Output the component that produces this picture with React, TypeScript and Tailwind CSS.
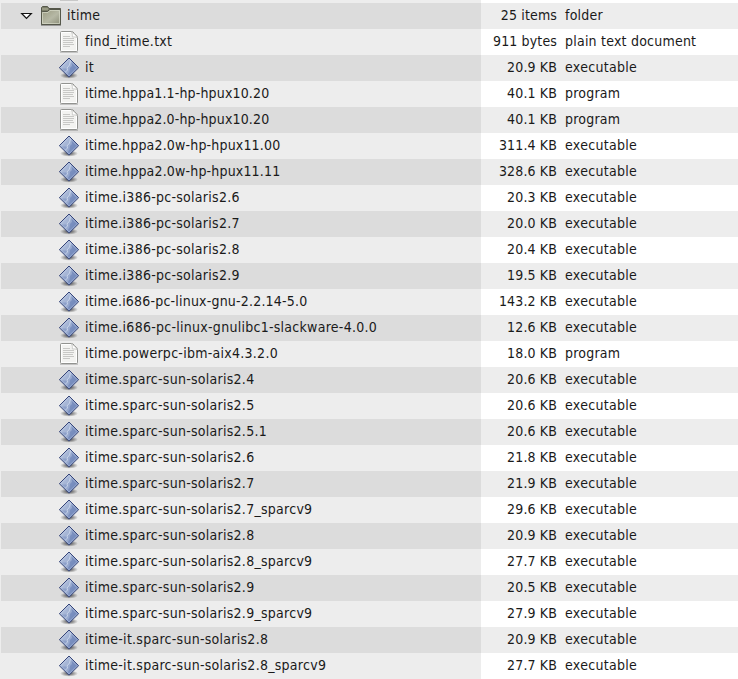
type Kind = "folder" | "document" | "executable";

interface Entry {
  name: string;
  size: string;
  type: string;
  kind: Kind;
  tracking?: string;
}

const exe = (name: string, size: string, tracking?: string): Entry => ({
  name,
  size,
  type: "executable",
  kind: "executable",
  tracking,
});
const program = (name: string, size: string, tracking?: string): Entry => ({
  name,
  size,
  type: "program",
  kind: "document",
  tracking,
});

const entries: Entry[] = [
  { name: "itime", size: "25 items", type: "folder", kind: "folder" },
  { name: "find_itime.txt", size: "911 bytes", type: "plain text document", kind: "document" },
  exe("it", "20.9 KB"),
  program("itime.hppa1.1-hp-hpux10.20", "40.1 KB", "tracking-[0.16px]"),
  program("itime.hppa2.0-hp-hpux10.20", "40.1 KB", "tracking-[0.16px]"),
  exe("itime.hppa2.0w-hp-hpux11.00", "311.4 KB", "tracking-[0.18px]"),
  exe("itime.hppa2.0w-hp-hpux11.11", "328.6 KB", "tracking-[0.18px]"),
  exe("itime.i386-pc-solaris2.6", "20.3 KB"),
  exe("itime.i386-pc-solaris2.7", "20.0 KB"),
  exe("itime.i386-pc-solaris2.8", "20.4 KB"),
  exe("itime.i386-pc-solaris2.9", "19.5 KB"),
  exe("itime.i686-pc-linux-gnu-2.2.14-5.0", "143.2 KB", "tracking-[0.2px]"),
  exe("itime.i686-pc-linux-gnulibc1-slackware-4.0.0", "12.6 KB"),
  program("itime.powerpc-ibm-aix4.3.2.0", "18.0 KB"),
  exe("itime.sparc-sun-solaris2.4", "20.6 KB"),
  exe("itime.sparc-sun-solaris2.5", "20.6 KB"),
  exe("itime.sparc-sun-solaris2.5.1", "20.6 KB"),
  exe("itime.sparc-sun-solaris2.6", "21.8 KB"),
  exe("itime.sparc-sun-solaris2.7", "21.9 KB"),
  exe("itime.sparc-sun-solaris2.7_sparcv9", "29.6 KB"),
  exe("itime.sparc-sun-solaris2.8", "20.9 KB"),
  exe("itime.sparc-sun-solaris2.8_sparcv9", "27.7 KB"),
  exe("itime.sparc-sun-solaris2.9", "20.5 KB"),
  exe("itime.sparc-sun-solaris2.9_sparcv9", "27.9 KB"),
  exe("itime-it.sparc-sun-solaris2.8", "20.9 KB"),
  exe("itime-it.sparc-sun-solaris2.8_sparcv9", "27.7 KB"),
];

function Gradients() {
  return (
    <svg className="absolute size-0" aria-hidden="true">
      <defs>
        <linearGradient id="gem" x1="0" y1="0" x2="1" y2="0.6">
          <stop offset="0.1" stopColor="#b4c2de" />
          <stop offset="0.5" stopColor="#a3b3d4" />
          <stop offset="0.9" stopColor="#7f94c2" />
        </linearGradient>
        <linearGradient id="folder" x1="0" y1="0" x2="1" y2="1">
          <stop offset="0" stopColor="#98997f" />
          <stop offset="0.55" stopColor="#b6b8a5" />
          <stop offset="1" stopColor="#8b8d78" />
        </linearGradient>
        <radialGradient id="shade">
          <stop offset="0.2" stopColor="#000" stopOpacity="0.55" />
          <stop offset="1" stopColor="#000" stopOpacity="0" />
        </radialGradient>
      </defs>
    </svg>
  );
}

function FolderIcon() {
  return (
    <svg viewBox="0 0 24 26" className="h-[26px] w-6">
      <path d="M2 22.5h20" stroke="#000" strokeOpacity="0.3" />
      <path d="M2.5 21.5v-17l1-1h5l1.5 2h11.5v16z" fill="#7b7d68" stroke="#55574a" />
      <path d="M3 5h6v2H3z" fill="#989a84" />
      <path d="M2.5 21.5v-12l1-1h5l2-2h11v15z" fill="url(#folder)" stroke="#55574a" />
      <path d="M3.5 20.5v-11H9l2-2h9.5v13z" fill="none" stroke="#dcdece" strokeOpacity="0.65" />
    </svg>
  );
}

function DocumentIcon() {
  return (
    <svg viewBox="0 0 24 26" className="h-[26px] w-6">
      <path d="M4 23.2h18" stroke="#000" strokeOpacity="0.25" />
      <path d="M4.5 3.5q0-1 1-1h10q1.500 0 3 2 3 2.500 3 4v13q0 1-1 1h-15q-1 0-1-1z" fill="#f3f3f1" stroke="#929390" />
      <path d="M5.500 21.500v-18h10l5 5v13z" fill="none" stroke="#fff" />
      <path d="M7 7.500h7M7 9.500h11M7 11.500h11M7 13.500h10M7 15.500h11M7 17.500h7" stroke="#c8c8c6" />
      <path d="M15.500 3q1.300 2 .8 5 3-.5 4.900.6-.5-2.200-5.700-5.600z" fill="#fff" stroke="#b3b4b0" strokeWidth="0.600" />
    </svg>
  );
}

function ExecutableIcon() {
  return (
    <svg viewBox="0 0 24 26" className="h-[26px] w-6">
      <ellipse cx="13" cy="20.500" rx="9" ry="3.200" fill="url(#shade)" />
      <path d="M13 3.500l9.300 9.200L13 21.900l-9.300-9.200z" fill="url(#gem)" />
      <path d="M5 13.500l4.500 0 3-1.500-.5 3-2.500 3z" fill="#8ea1ca" />
      <path d="M15.500 6.500l6 6-8.500 8.500-1.500-1.500 2-2.500.5-4 2-2z" fill="#6f86b9" fillOpacity="0.700" />
      <path d="M14.500 5.500l-1 4.500-2.500 3 .5 2-2.500 2.500" fill="none" stroke="#c9d5ea" strokeWidth="1" />
      <path d="M13 4.700l8 8-8 8-8-8z" fill="none" stroke="#c5d1e8" strokeOpacity="0.400" />
      <path d="M13 3l9.700 9.700L13 22.200l-9.700-9.500z" fill="none" stroke="#35457a" />
    </svg>
  );
}

function Expander() {
  return (
    <svg viewBox="0 0 14 26" className="h-[26px] w-[14px]">
      <path d="M2.700 10.500h9.600l-4.800 4.900z" fill="#fff" stroke="#111" strokeWidth="1.200" />
    </svg>
  );
}

function Row({ entry }: { entry: Entry }) {
  const isFolder = entry.kind === "folder";
  return (
    <div className="group flex h-[26px] w-full leading-[24px]">
      <div className="w-px shrink-0 bg-[#ededed]" />
      <div className="flex w-[480px] shrink-0 bg-[#ededed] group-odd:bg-[#dcdcdc]">
        {isFolder ? (
          <div className="flex w-[66px] shrink-0 pl-[18px]">
            <Expander />
            <div className="ml-[6px]"><FolderIcon /></div>
          </div>
        ) : (
          <div className="w-[84px] shrink-0 pl-[55px]">
            {entry.kind === "document" ? <DocumentIcon /> : <ExecutableIcon />}
          </div>
        )}
        <span className={entry.tracking ?? "tracking-[0.27px]"}>{entry.name}</span>
      </div>
      <div className="flex flex-1 bg-white group-odd:bg-[#ededed]">
        <span className="w-[76px] text-right tracking-[0.14px]">{entry.size}</span>
        <span className={entry.kind === "executable" ? "pl-2 tracking-[0.3px]" : "pl-2 tracking-[0.22px]"}>
          {entry.type}
        </span>
      </div>
    </div>
  );
}

export default function App() {
  return (
    <div className="h-[679px] w-[738px] overflow-hidden bg-white font-['DejaVu_Sans_Condensed','DejaVu_Sans',sans-serif] text-[14px] whitespace-nowrap text-[#1a1a1a] [font-stretch:condensed]">
      <Gradients />
      <div className="flex h-[3px]">
        <div className="w-[481px] bg-[#ededed] pl-[60px]">
          <div className="h-px w-[18px] bg-[#c8c8c8]" />
        </div>
      </div>
      <div>
        {entries.map((entry) => (
          <Row key={entry.name} entry={entry} />
        ))}
      </div>
    </div>
  );
}
